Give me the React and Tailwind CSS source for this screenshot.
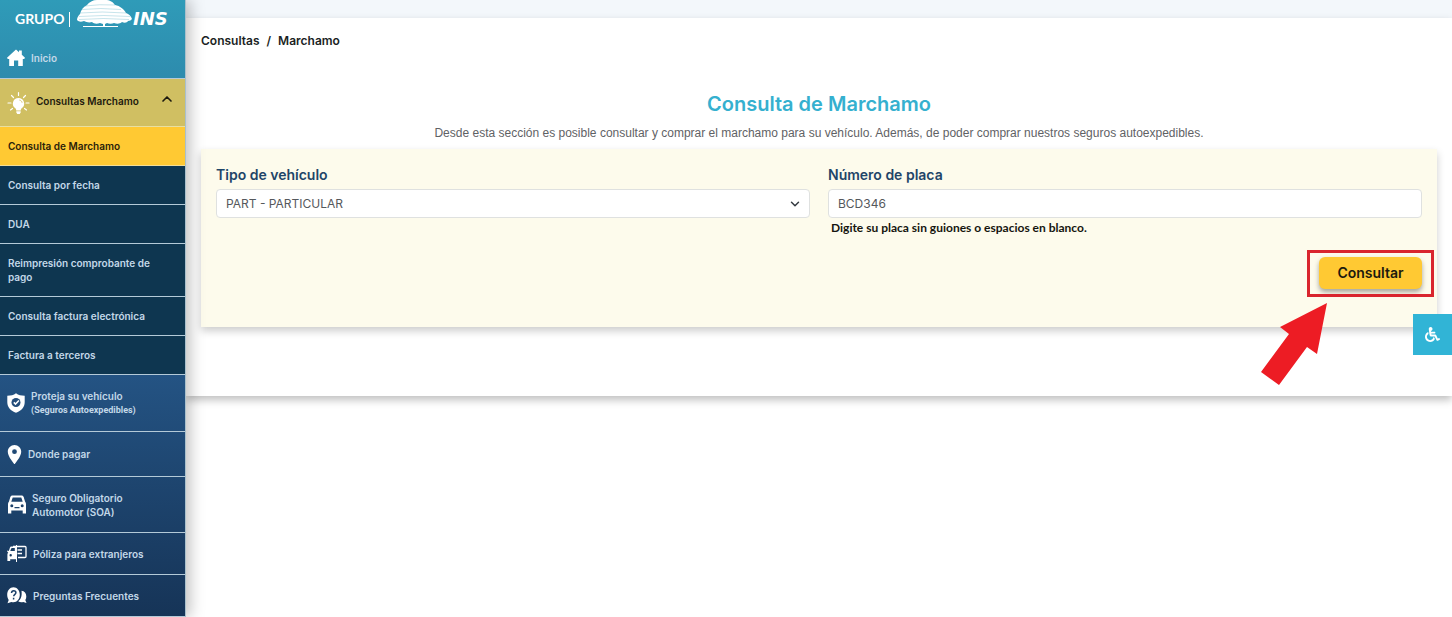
import { FaWheelchair } from 'react-icons/fa'
import { MdLocationOn } from 'react-icons/md'
import { ChevronDown, ChevronUp } from 'lucide-react'

const subLinks = [
  { label: 'Consulta por fecha' },
  { label: 'DUA' },
  { label: 'Reimpresión comprobante de pago' },
  { label: 'Consulta factura electrónica' },
  { label: 'Factura a terceros' },
]

const Logo = () => (
  <svg viewBox="0 0 186 38" className="block h-[38px] w-[186px]" role="img" aria-label="Grupo INS">
    <g fill="#fff">
      <path d="M77 20c0-2 1-4 3-6 1-4 3-7 7-9 2-3 6-5 10-5h8c5 0 8 2 10 5 5 1 9 4 11 8 3 1 5 3 6 6-1 1-2 2-4 2-1 2-4 2-6 1-2 2-5 2-8 1-2 1-5 1-7 0l-2 1v2h13v1H83v-1h20v-2l-3-1c-3 1-6 1-8-1-3 1-6 0-8-1-3 1-5 1-7-1z" />
      <text x="15" y="24" fontFamily="Lato, sans-serif" fontWeight="700" fontSize="14">GRUPO</text>
      <text x="133" y="25" fontFamily="'DejaVu Sans', sans-serif" fontWeight="700" fontStyle="italic" fontSize="18">INS</text>
      <path d="M69 12h1v15h-1z" />
    </g>
    <g fill="none" stroke="#2e98b5" strokeWidth="0.6" opacity="0.45">
      <path d="M85 6q14-2 30-1M82 9.500q18-2 39 0M80 13q22-2 46 0M79 16.500q24-2 51 0M79 19.500q24-2 50 0" />
    </g>
  </svg>
)

const HomeIcon = () => (
  <svg viewBox="0 0 18 18" className="size-[18px] shrink-0" aria-hidden="true">
    <path d="M9 .5 12 3.200V1.500h2.800v4.200L18 8.800l-.8 1.100h-1.400V17h-4.600v-5.500H7V17H2.200V9.900H.8L0 8.800z" fill="#fff" />
  </svg>
)

const BulbIcon = () => (
  <svg viewBox="0 0 24 24" className="size-6 shrink-0" aria-hidden="true">
    <path
      d="M11.500 7a5.600 5.600 0 0 0-3.500 10c1 .8 1.200 1.600 1.200 2.500h4.600c0-.9.200-1.700 1.200-2.500a5.600 5.600 0 0 0-3.500-10zM9.300 20.300h4.400v1.200l-1 1.500h-2.400l-1-1.500z"
      fill="#fff"
    />
    <path
      d="M11.500 1.500v3M4.500 4.500l2 2M18.500 4.500l-2 2M1 12h3M19 12h3M3.500 19l2-1.500M19.500 19l-2-1.500"
      stroke="#fff"
      strokeWidth="1.200"
      strokeLinecap="round"
    />
    <path d="M12.300 9c1.600.3 2.600 1.300 2.800 2.800" fill="none" stroke="#d0bf62" strokeWidth="0.800" />
  </svg>
)

const ShieldIcon = () => (
  <svg viewBox="0 0 18 20" className="h-5 w-[18px] shrink-0" aria-hidden="true">
    <path d="M9 .3c2.500 1.800 5 2.400 8.700 2.500v6.400c0 5-3.500 8.600-8.700 10.500C3.800 17.800.3 14.200.3 9.200V2.800C4 2.700 6.500 2.100 9 .3z" fill="#fff" />
    <circle cx="9" cy="9.500" r="4.500" fill="#234c7a" />
    <path d="m6.800 9.400 1.700 1.700 3.400-3.600" fill="none" stroke="#fff" strokeWidth="1.500" />
  </svg>
)

const CarIcon = () => (
  <svg viewBox="0 0 18 19" className="h-[19px] w-[18px] shrink-0" aria-hidden="true">
    <path
      d="M4.500.500h9c1.100 0 1.900.6 2.200 1.600L17 6.500c.7.700 1 1.500 1 2.500v9.500h-3.300v-3H3.300v3H0V9c0-1 .3-1.800 1-2.500l1.300-4.400C2.600 1.100 3.400.500 4.500.500zM4.700 2.500 3.300 6.700h11.400l-1.400-4.200zM3.800 9.200a1.500 1.500 0 1 0 0 3 1.500 1.500 0 0 0 0-3zM14.200 9.200a1.500 1.500 0 1 0 0 3 1.500 1.500 0 0 0 0-3zM6.500 12h5v1.200h-5z"
      fill="#fff"
      fillRule="evenodd"
    />
  </svg>
)

const PolicyIcon = () => (
  <svg viewBox="0 0 20 17" className="h-[17px] w-5 shrink-0" aria-hidden="true">
    <path d="M6 1.500h12c.6 0 1 .4 1 1v9c0 .6-.4 1-1 1h-7M10.500 5H15M10.500 8.500H15" fill="none" stroke="#fff" strokeWidth="1.300" />
    <path d="M9.500 0v17" stroke="#fff" strokeWidth="1" />
    <path
      d="M9 1.500H4.500c-.8 0-1.300.5-1.600 1.300L1.800 6 .3 5.500v1.400l1 .5c-.7.500-.9 1.200-.9 2.100V16h2.800v-1.800H9zM7.800 3v3H3.300l.9-2.500c.1-.3.400-.5.800-.5zM3.700 9a1.200 1.200 0 1 1 0 2.400A1.200 1.200 0 0 1 3.700 9z"
      fill="#fff"
      fillRule="evenodd"
    />
  </svg>
)

const FaqIcon = () => (
  <svg viewBox="0 0 20 17" className="h-[17px] w-5 shrink-0" aria-hidden="true">
    <path d="M6.500.3c3.600 0 6.300 3.200 6.300 7.500s-2.700 7.500-6.300 7.500c-.8 0-1.500-.1-2.100-.4L.5 16.300l1.200-3.400C.7 11.600.2 9.800.2 7.800.2 3.500 2.900.3 6.500.3z" fill="#fff" />
    <path d="M14.500 3.800c3 .3 4.800 2.600 4.800 5.600 0 1.400-.3 2.700-1 3.700l1.200 3-3.300-1.100c-1.800.5-3.600.2-5-.8 2.400-1.500 4-4.500 3.300-10.400z" fill="#fff" />
    <path d="M4.500 6c.1-1.500 1-2.200 2.200-2.200 1.300 0 2.200.8 2.200 2 0 1.600-2.200 1.700-2.200 3.500M6.600 10.800v1.600" fill="none" stroke="#1b4069" strokeWidth="1.500" />
  </svg>
)

const rowClass = 'flex items-center border-b border-[#b4cad8] text-[#c3d8e8]'

const Sidebar = () => (
  <aside className="relative z-10 w-[186px] shrink-0 border-r border-[#a9c0cc] bg-linear-to-b from-[#2f9bb8] via-[#26588a] via-55% to-[#163457] text-[10px] leading-[14px] font-semibold shadow-[4px_0_14px_rgba(0,0,0,0.25)]">
    <Logo />
    <nav>
      <a href="#inicio" className={`${rowClass} h-[41px] gap-1.5 pl-[7px]`}>
        <HomeIcon />
        Inicio
      </a>
      <button type="button" aria-expanded="true" className="flex h-12 w-full items-center gap-[5px] border-b border-[#e9dfa0] bg-[#d0bf62] pr-2.5 pl-[7px] text-left text-[#1d1a0e]">
        <BulbIcon />
        <span className="grow pb-1">Consultas Marchamo</span>
        <ChevronUp className="mb-2 size-4" strokeWidth={2.5} />
      </button>
      <a href="#consulta" aria-current="page" className="flex h-[39px] items-center border-b border-[#f3dd96] bg-[#ffc933] pl-2 text-[#2b220a]">
        Consulta de Marchamo
      </a>
      <ul className="bg-[#0e3650]">
        {subLinks.map((item) => (
          <li key={item.label}>
            <a href="#consulta" className={`${rowClass} min-h-[39px] py-3 pr-6 pl-2`}>
              {item.label}
            </a>
          </li>
        ))}
      </ul>
      <a href="#seguros" className={`${rowClass} h-[57px] gap-1.5 pl-[7px]`}>
        <ShieldIcon />
        <span>
          Proteja su vehículo
          <small className="block font-[Roboto,sans-serif] text-[9px] font-bold">(Seguros Autoexpedibles)</small>
        </span>
      </a>
      <a href="#pagar" className={`${rowClass} h-[45px] gap-0.5 pl-[3px]`}>
        <MdLocationOn className="size-[23px] text-white" />
        Donde pagar
      </a>
      <a href="#soa" className={`${rowClass} h-14 gap-1.5 pr-8 pl-2`}>
        <CarIcon />
        Seguro Obligatorio Automotor (SOA)
      </a>
      <a href="#poliza" className={`${rowClass} h-[42px] gap-1.5 pl-[7px]`}>
        <PolicyIcon />
        Póliza para extranjeros
      </a>
      <a href="#preguntas" className={`${rowClass} h-[42px] gap-1.5 pl-[7px]`}>
        <FaqIcon />
        Preguntas Frecuentes
      </a>
    </nav>
  </aside>
)

const fieldClass = 'h-[29px] w-full rounded-sm border border-[#dfe1e0] bg-white px-[9px] text-xs text-[#55585c]'
const labelClass = 'mb-1 block text-sm leading-5 font-semibold text-[#1f4568]'

const SearchForm = () => (
  <form className="bg-[#fdfbec] px-[15px] pt-4 pb-[38px] shadow-[0_4px_8px_rgba(0,0,0,0.2)]" onSubmit={(e) => e.preventDefault()}>
    <div className="grid grid-cols-2 gap-[18px]">
      <div>
        <label htmlFor="tipo" className={labelClass}>Tipo de vehículo</label>
        <div className="grid items-center">
          <select id="tipo" className={`${fieldClass} col-start-1 row-start-1 appearance-none`}>
            <option>PART - PARTICULAR</option>
          </select>
          <ChevronDown className="pointer-events-none col-start-1 row-start-1 mr-2 size-3.5 justify-self-end text-[#343a40]" strokeWidth={2.5} />
        </div>
      </div>
      <div>
        <label htmlFor="placa" className={labelClass}>Número de placa</label>
        <input id="placa" type="text" defaultValue="BCD346" aria-describedby="placa-ayuda" className={fieldClass} />
        <p id="placa-ayuda" className="mt-0.5 pl-[3px] font-[Lato,sans-serif] text-xs leading-4 font-bold text-[#15150f]">
          Digite su placa sin guiones o espacios en blanco.
        </p>
      </div>
    </div>
    <div className="mt-[21px] flex justify-end">
      <div className="relative">
        <button type="submit" className="block h-8 w-[103px] rounded-md bg-[#ffc933] text-sm font-semibold text-[#1d1a0e] shadow-[0_3px_5px_rgba(0,0,0,0.35)]">
          Consultar
        </button>
        <div className="pointer-events-none absolute -inset-x-3 -top-[7px] -bottom-2 border-3 border-[#d9252e]" />
        <svg viewBox="0 0 66 82" className="pointer-events-none absolute top-[46px] -left-[58px] h-[82px] w-[66px]" aria-hidden="true">
          <path d="M66 0 19 24l9 7L0 69l18 13 28-38 10 7z" fill="#ed1c24" />
        </svg>
      </div>
    </div>
  </form>
)

const App = () => {
  return (
    <div className="flex min-h-screen overflow-x-hidden bg-white font-['Inter',sans-serif]">
      <Sidebar />
      <main className="min-w-0 grow">
        <div className="h-[18px] bg-[#f3f7fb]" />
        <section className="px-[15px] pt-3.5 pb-[69px] shadow-[0_4px_8px_rgba(0,0,0,0.25)]">
          <nav aria-label="Ruta" className="flex gap-[7px] text-xs leading-[18px] font-semibold text-[#1b1f24]">
            <a href="#consultas">Consultas</a>
            <span>/</span>
            <span>Marchamo</span>
          </nav>
          <h1 className="mt-10 text-center text-xl leading-7 font-semibold text-[#35b0cf]">Consulta de Marchamo</h1>
          <p className="mt-1.5 mb-[7px] text-center font-['Liberation_Sans',sans-serif] text-xs leading-[18px] text-[#5f6265]">
            Desde esta sección es posible consultar y comprar el marchamo para su vehículo. Además, de poder comprar nuestros seguros autoexpedibles.
          </p>
          <SearchForm />
        </section>
      </main>
      <button type="button" aria-label="Accesibilidad" className="fixed top-[314px] right-0 z-20 flex h-[41px] w-[39px] items-center justify-center bg-[#31b4d6] text-white">
        <FaWheelchair className="size-[15px]" />
      </button>
    </div>
  )
}

export default App
